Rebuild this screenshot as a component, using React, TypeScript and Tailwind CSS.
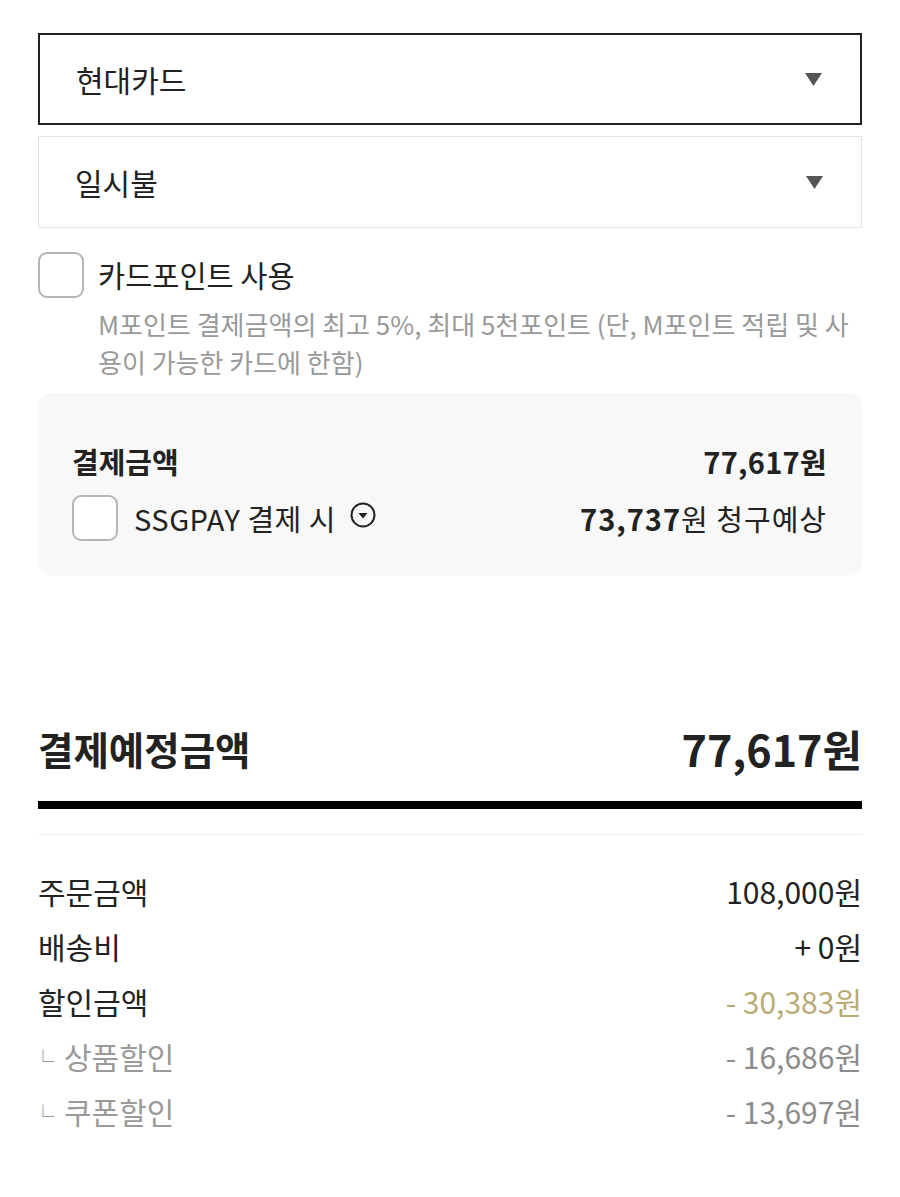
import React from "react";

const font = {
  fontFamily: '"Noto Sans CJK KR", "Noto Sans", sans-serif',
};

const Caret = () => (
  <svg width="17" height="13" viewBox="0 0 17 13" className="shrink-0">
    <path d="M0 0 H17 L8.5 13 Z" fill="#555" />
  </svg>
);

const SelectBox = ({ label, active }: { label: string; active?: boolean }) => (
  <div
    className={`flex h-[92px] items-center justify-between bg-white pl-[36px] pr-[38px] ${
      active ? "border-2 border-[#222]" : "border border-[#e2e2e2]"
    }`}
  >
    <span className="text-[30px] leading-none text-[#222]">{label}</span>
    <Caret />
  </div>
);

const Checkbox = () => (
  <div className="h-[46px] w-[46px] shrink-0 rounded-[9px] border-2 border-[#b5b5b5] bg-white" />
);

const InfoIcon = () => (
  <svg width="26" height="26" viewBox="0 0 26 26" className="shrink-0">
    <circle cx="13" cy="13" r="11.5" fill="none" stroke="#222" strokeWidth="2" />
    <path d="M8.5 11 H17.5 L13 16.5 Z" fill="#222" />
  </svg>
);

const Row = ({
  label,
  value,
  sub,
  gold,
}: {
  label: string;
  value: string;
  sub?: boolean;
  gold?: boolean;
}) => (
  <div className="flex h-[55px] items-center justify-between text-[30px] leading-none">
    <span className={sub ? "text-[#9a9a9a]" : "text-[#222]"}>
      {sub && <span className="-ml-[6px] mr-[10px] text-[22px]">└</span>}
      {label}
    </span>
    <span
      className={
        gold ? "text-[#b9ab74]" : sub ? "text-[#8c8c8c]" : "text-[#222]"
      }
    >
      {value}
    </span>
  </div>
);

export default function App() {
  return (
    <div className="min-h-[1197px] bg-white px-[38px] pt-[33px]" style={font}>
      {/* Card select */}
      <SelectBox label="현대카드" active />
      <div className="mt-[11px]">
        <SelectBox label="일시불" />
      </div>

      {/* Card point */}
      <div className="mt-[24px] flex items-center gap-[14px]">
        <Checkbox />
        <span className="text-[29.5px] leading-none text-[#222]">카드포인트 사용</span>
      </div>
      <div className="mt-[7px] pl-[60px] text-[26px] leading-[38px] text-[#999]">
        <div className="whitespace-nowrap">
          M포인트 결제금액의 최고 5%, 최대 5천포인트 (단, M포인트 적립 및 사
        </div>
        <div className="whitespace-nowrap">용이 가능한 카드에 한함)</div>
      </div>

      {/* Payment box */}
      <div className="mt-[12px] rounded-[14px] bg-[#f8f8f8] pb-[35px] pl-[34px] pr-[35px] pt-[50px]">
        <div className="flex h-[36px] items-center justify-between font-bold leading-none text-[#222]">
          <span className="text-[29px]">결제금액</span>
          <span className="text-[29px] tracking-[0.3px]">77,617원</span>
        </div>
        <div className="mt-[16px] flex h-[46px] items-center justify-between">
          <div className="flex items-center">
            <Checkbox />
            <span className="ml-[16px] text-[29px] leading-none tracking-[0.5px] text-[#222]">
              SSGPAY 결제 시
            </span>
            <span className="-mt-[6px] ml-[14px]">
              <InfoIcon />
            </span>
          </div>
          <div className="text-[29px] leading-none tracking-[1px] text-[#222]">
            <span className="font-bold">73,737</span>원 청구예상
          </div>
        </div>
      </div>

      {/* Total */}
      <div className="mt-[152px] flex h-[40px] items-center justify-between font-bold leading-none text-[#222]">
        <span className="text-[38.5px]">결제예정금액</span>
        <span className="text-[43px]">77,617원</span>
      </div>
      <div className="mt-[33px] h-[8px] bg-black" />
      <div className="mt-[25px] h-px bg-[#ececec]" />

      {/* Breakdown */}
      <div className="mt-[28px]">
        <Row label="주문금액" value="108,000원" />
        <Row label="배송비" value="+ 0원" />
        <Row label="할인금액" value="- 30,383원" gold />
        <Row label="상품할인" value="- 16,686원" sub />
        <Row label="쿠폰할인" value="- 13,697원" sub />
      </div>
    </div>
  );
}
